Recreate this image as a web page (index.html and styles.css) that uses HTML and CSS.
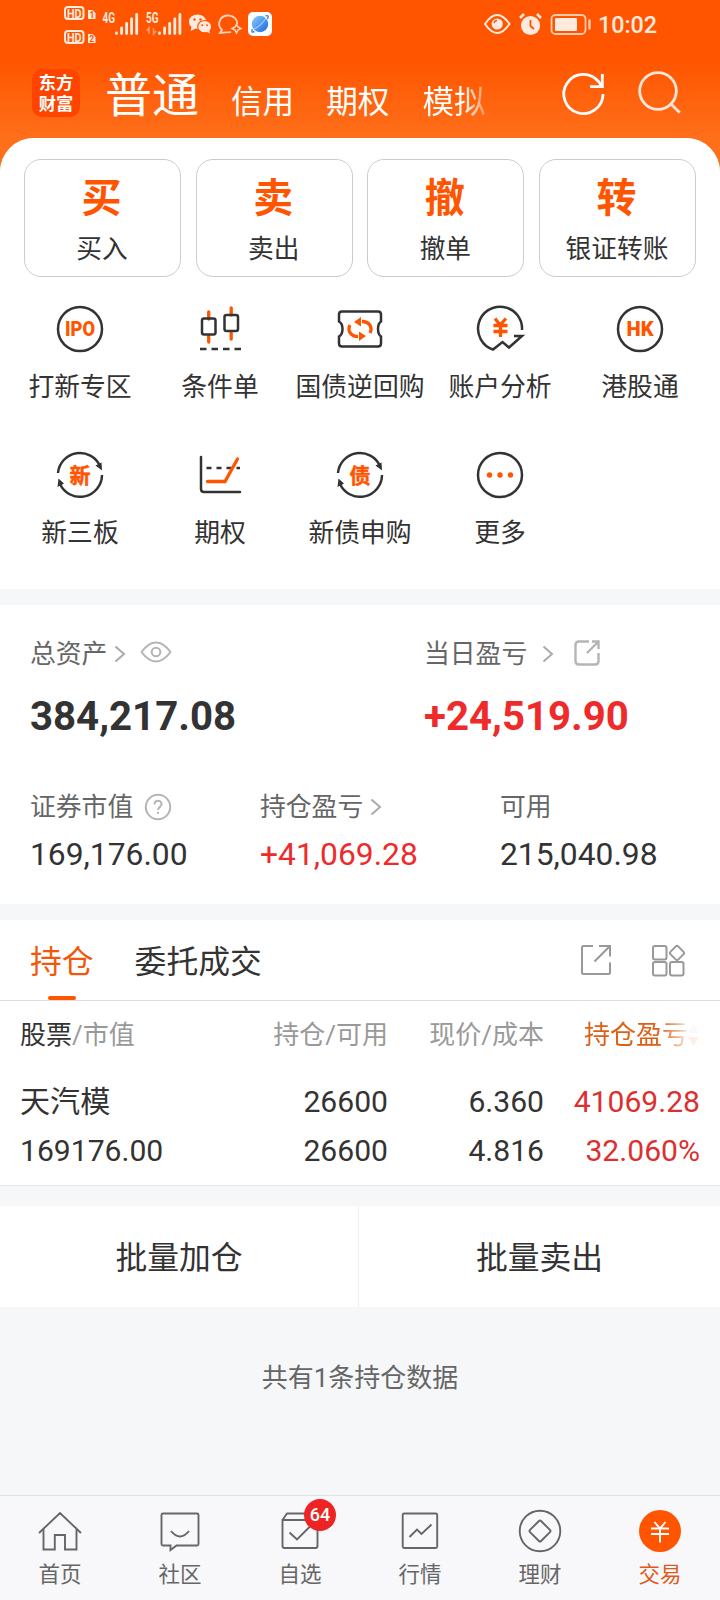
FILE: index.html
```html
<!DOCTYPE html>
<html lang="zh-CN">
<head>
<meta charset="utf-8">
<title>交易</title>
<link rel="stylesheet" href="styles.css">
</head>
<body>
<div class="screen">
  <header class="top">
    <div class="status">
      <svg class="status-left" viewBox="60 0 220 48" width="220" height="48">
        <g fill="none" stroke="#ffeadf" stroke-width="2"><rect x="65" y="7" width="18.500" height="12" rx="3"/><rect x="65" y="31" width="18.500" height="12" rx="3"/></g>
        <g fill="#ffeadf"><path d="M88 10h4.500l3 3v6h-7.500zM88 34h4.500l3 3v6h-7.500z"/>
          <g class="hd"><text x="67" y="17.600" textLength="14.600" lengthAdjust="spacingAndGlyphs">HD</text><text x="67" y="41.600" textLength="14.600" lengthAdjust="spacingAndGlyphs">HD</text></g>
          <g class="net"><text x="102.500" y="22.800" textLength="12.500" lengthAdjust="spacingAndGlyphs">4G</text><text x="146" y="22.800" textLength="12.500" lengthAdjust="spacingAndGlyphs">5G</text></g>
        </g>
        <g class="sim"><text x="89.600" y="17.800">1</text><text x="89.200" y="41.800">2</text></g>
        <g stroke="#ffeadf" stroke-width="2.800" stroke-linecap="round"><path d="M116.500 33v.500M121.600 28v5.500M126.600 23.500v10M131.600 19v14.500M136.700 14.500v19M159.500 33v.500M164.600 28v5.500M169.700 23.500v10M174.800 19v14.500M179.900 14.500v19"/></g>
        <path d="M149 34v-6l-2.500 3M153.500 28v6l2.500-3" fill="none" stroke="#ff9a66" stroke-width="1.500"/>
        <g fill="#ffeadf"><ellipse cx="197.500" cy="21.700" rx="8.600" ry="7.200"/><path d="M191.500 26l-.800 5 5-2.500z"/><ellipse cx="204.700" cy="26.700" rx="7" ry="6.200" stroke="#ff5500" stroke-width="1.200"/><path d="M206 31.500l4 2-.800-4z"/></g>
        <g fill="#ff5500"><circle cx="194.500" cy="19.500" r="1.200"/><circle cx="200.500" cy="19.500" r="1.200"/><circle cx="202.300" cy="25.300" r="1"/><circle cx="207" cy="25.300" r="1"/></g>
        <path d="M231 32q-2 .600-5 .300l-6 .700 2-3c-5.500-5-2.500-14.500 6-14.500 5.500 0 9.300 3.700 9.300 8.500" fill="none" stroke="#ffd6c2" stroke-width="1.800"/>
        <path d="M236.500 24.500l1.500 2.500 3 1.500-3 1.500-1.500 3-1.500-3-3-1.500 3-1.500z" fill="none" stroke="#ffd6c2" stroke-width="1.600"/>
        <rect x="248" y="12" width="24" height="24" rx="5" fill="#fff"/>
        <defs><linearGradient id="planet" x2="1" y2="1"><stop offset="0" stop-color="#8dccff"/><stop offset="1" stop-color="#1867dc"/></linearGradient></defs>
        <circle cx="260" cy="24" r="8.200" fill="url(#planet)"/><path d="M252.500 29q-2 4.200 2 2.500M265.500 16q4-1.500 2 3" fill="none" stroke="#3c8cf0" stroke-width="1.500"/><path d="M254 29q7-3 12-11" fill="none" stroke="#9bd0ff" stroke-width="1.200"/>
      </svg>
      <svg class="status-right" viewBox="480 0 116 48" width="116" height="48">
        <g fill="none" stroke="#ffeadf"><path d="M485 24q6-9 12.200-9t12.300 9q-6.200 9-12.300 9T485 24z" stroke-width="2"/><rect x="551.500" y="15" width="34" height="19" rx="4" stroke="#ffc9ad" stroke-width="1.800"/><path d="M589.500 20.500v8" stroke="#ffc9ad" stroke-width="2.400" stroke-linecap="round"/><path d="M520 18l4-4M537 14l4 4" stroke-width="2.500"/></g>
        <circle cx="497.200" cy="24" r="5.600" fill="#ffeadf"/><path d="M494 23q.500-2.500 3-2.500" stroke="#ff5500" stroke-width="1.300" fill="none"/>
        <circle cx="530.500" cy="25.500" r="9.600" fill="#ffeadf"/><path d="M530.500 20v6l3.500 3" fill="none" stroke="#ff5500" stroke-width="1.800"/>
        <rect x="555" y="18" width="22" height="13" rx="1" fill="#ffeadf"/>
      </svg>
      <span class="clock">10:02</span>
    </div>
    <div class="bar">
      <div class="logo"><span>东方</span><span>财富</span></div>
      <nav class="modes">
        <span class="mode mode-on">普通</span><span class="mode">信用</span><span class="mode">期权</span><span class="mode mode-fade">模拟</span>
      </nav>
      <svg class="bar-icons" viewBox="560 69 126 48" width="126" height="48" fill="none" stroke="#fff" stroke-width="2.800">
        <path d="M603 94a19.600 19.600 0 1 1-4.500-12.500L602 86.200M602.300 74v12.700H590"/>
        <g stroke="#ffe6d8"><circle cx="658" cy="91" r="18.300"/><path d="M671 104l8.800 8.800"/></g>
      </svg>
    </div>
  </header>

  <main class="sheet">
    <section class="quick">
      <div class="card"><b>买</b><span>买入</span></div>
      <div class="card"><b>卖</b><span>卖出</span></div>
      <div class="card"><b>撤</b><span>撤单</span></div>
      <div class="card"><b>转</b><span>银证转账</span></div>
    </section>
    <section class="tools">
      <div class="tool"><svg viewBox="-25 -25 50 50"><circle r="22"/><text class="glyph" x="0" y="7" textLength="30" lengthAdjust="spacingAndGlyphs">IPO</text></svg><span>打新专区</span></div>
      <div class="tool"><svg viewBox="-25 -25 50 50"><g class="hot"><path d="M-11.300-17v7M-11.300 7v6M11.200-21v7M11.200 4v6" stroke-linecap="round"/></g><rect x="-18" y="-10.500" width="13.500" height="16" rx="2"/><rect x="4.500" y="-14" width="13.500" height="16" rx="2"/><path d="M-20 20H21.500" stroke-dasharray="6.500 5"/></svg><span>条件单</span></div>
      <div class="tool"><svg viewBox="-25 -25 50 50"><path d="M-18-17.500h36q3 0 3 3v7q-3 2-3 7.500t3 7.500v7q0 3-3 3h-36q-3 0-3-3v-7q3.500-2 3.500-7.500t-3.500-7.500v-7q0-3 3-3z"/><path class="hot" d="M-10-4C-13 2-9 7.500-2 7.500M10 4C13-2 9-7.500 2-7.500"/><path class="fill" d="M-6-7L1-12v9.500zM6 7L-1 12V2.500z"/></svg><span>国债逆回购</span></div>
      <div class="tool"><svg viewBox="-25 -25 50 50"><path d="M22 1A22 22 0 1 0-7 20.500L2.500 13 9 18.500 22 7H14"/><path class="hot" d="M-5-10.500L0-4l6-6.500M-6.500-3.500h14M-6.500 2.500h14M.500-4v12"/></svg><span>账户分析</span></div>
      <div class="tool"><svg viewBox="-25 -25 50 50"><circle r="22"/><text class="glyph" x="0" y="7" textLength="27" lengthAdjust="spacingAndGlyphs">HK</text></svg><span>港股通</span></div>
      <div class="tool"><svg viewBox="-25 -25 50 50"><path d="M-22-2A22 22 0 0 1 20-9M22 0A22 22 0 0 1-20 9"/><path class="dark" d="M15.500-9.500l6-3 .500 8zM-22.500 12l1-8.500 5.500 5z"/><text class="glyph cn" x="0" y="7.500">新</text></svg><span>新三板</span></div>
      <div class="tool"><svg viewBox="-25 -25 50 50"><path d="M-19-18v32q0 3 3 3h36" stroke-linecap="round"/><path d="M-13.500-7H20" stroke-dasharray="5 5"/><path class="hot" d="M-12.500 6.500H5L17.500-16" stroke-linecap="round"/></svg><span>期权</span></div>
      <div class="tool"><svg viewBox="-25 -25 50 50"><path d="M-22-2A22 22 0 0 1 20-9M22 0A22 22 0 0 1-20 9"/><path class="dark" d="M15.500-9.500l6-3 .500 8zM-22.500 12l1-8.500 5.500 5z"/><text class="glyph cn" x="0" y="7.500">债</text></svg><span>新债申购</span></div>
      <div class="tool"><svg viewBox="-25 -25 50 50"><circle r="22"/><g class="fill"><circle cx="-10.500" cy="0" r="2.700"/><circle cx="0" cy="0" r="2.700"/><circle cx="10.500" cy="0" r="2.700"/></g></svg><span>更多</span></div>
    </section>
    <div class="gap"></div>

    <section class="assets">
      <div class="totals">
        <div class="total">
          <div class="label"><span>总资产</span>
            <svg class="chev" width="12" height="18" viewBox="0 0 12 18"><path d="M1.500 1.500L10 9l-8.500 7.500"/></svg>
            <svg class="eye" width="32" height="24" viewBox="0 0 32 24"><path d="M1.500 12q7-9.500 14.500-9.500T30.500 12q-7 9.500-14.500 9.500T1.500 12z"/><circle cx="16" cy="12" r="4.300"/></svg>
          </div>
          <strong>384,217.08</strong>
        </div>
        <div class="total">
          <div class="label"><span>当日盈亏</span>
            <svg class="chev chev-far" width="12" height="18" viewBox="0 0 12 18"><path d="M1.500 1.500L10 9l-8.500 7.500"/></svg>
            <svg class="share" width="28" height="28" viewBox="0 0 28 28"><path d="M16 2.500H6q-3.500 0-3.500 3.500v16q0 3.500 3.500 3.500h16q3.500 0 3.500-3.500V14M14 14L25 3M19 2.500h6.500V10"/></svg>
          </div>
          <strong class="up">+24,519.90</strong>
        </div>
      </div>
      <div class="parts">
        <div class="part"><div class="label"><span>证券市值</span><svg class="help" width="28" height="28" viewBox="0 0 28 28"><circle cx="14" cy="14" r="12.200"/><path d="M10.500 11.500c0-5 7-4.800 7-.500 0 2.800-3.500 3-3.500 6M14 18.800v2"/></svg></div><span class="num">169,176.00</span></div>
        <div class="part"><div class="label"><span>持仓盈亏</span><svg class="chev" width="12" height="18" viewBox="0 0 12 18"><path d="M1.500 1.500L10 9l-8.500 7.500"/></svg></div><span class="num up">+41,069.28</span></div>
        <div class="part"><div class="label"><span>可用</span></div><span class="num">215,040.98</span></div>
      </div>
    </section>
    <div class="gap"></div>

    <section class="holdings">
      <div class="tabs">
        <span class="tab tab-on">持仓</span><span class="tab">委托成交</span>
        <svg class="tab-icons" viewBox="578 940 108 40" width="108" height="40"><path d="M593 946h-9.500q-1.500 0-1.500 1.500v25q0 1.500 1.500 1.500h25q1.500 0 1.500-1.500V962.500M594.500 961.500L610 946M599 946h11v10.500"/><rect x="653" y="946" width="13.500" height="13.500" rx="2"/><rect x="653" y="962" width="13.500" height="13.500" rx="2"/><rect x="670" y="962" width="13.500" height="13.500" rx="2"/><rect x="671.500" y="947.500" width="11" height="11" rx="2" transform="rotate(45 677 953)"/></svg>
      </div>
      <div class="grid grid-head"><span><em>股票</em>/市值</span><span>持仓/可用</span><span>现价/成本</span><span class="sort">持仓盈亏<svg width="11" height="24" viewBox="0 0 11 24"><path d="M5.500 1L11 10H0z" fill="#ccc"/><path d="M5.500 23L0 14h11z" fill="#ff5500"/></svg></span></div>
      <div class="grid grid-row"><span>天汽模</span><span>26600</span><span>6.360</span><span class="up">41069.28</span></div>
      <div class="grid grid-row"><span>169176.00</span><span>26600</span><span>4.816</span><span class="up">32.060%</span></div>
    </section>
    <div class="batch"><span>批量加仓</span><span>批量卖出</span></div>
    <p class="summary">共有1条持仓数据</p>
  </main>

  <nav class="dock">
    <a class="dock-item"><svg viewBox="-24 -24 48 48"><path d="M-21 2L0-18 21 2M-16.500-2v20.500h11.300V4H5v14.500H16.500V-2"/></svg><span>首页</span></a>
    <a class="dock-item"><svg viewBox="-24 -24 48 48"><path d="M-17-17.500h34q1.500 0 1.500 1.500v29q0 1.500-1.500 1.500H-3.500L-9.500 19v-4.500H-17q-1.500 0-1.500-1.500v-29q0-1.500 1.500-1.500zM-9 0Q0 11 9 0"/></svg><span>社区</span></a>
    <a class="dock-item"><svg viewBox="-24 -24 48 48"><path d="M-17.500-11h35v26q0 2-2 2h-31q-2 0-2-2zM-17.500-11l4.500-6.500h26l4.500 6.500M-10.500 1.500l7.500 7L10-4.500"/></svg><span>自选</span><i class="badge">64</i></a>
    <a class="dock-item"><svg viewBox="-24 -24 48 48"><rect x="-17.300" y="-17.500" width="34.500" height="34.500" rx="1.500"/><path d="M-10.500 6L-3-1.500l4.500 4.500L11.500-6.500"/></svg><span>行情</span></a>
    <a class="dock-item"><svg viewBox="-24 -24 48 48"><circle r="20.300"/><rect x="-7.800" y="-7.800" width="15.600" height="15.600" rx="1.500" transform="rotate(45)"/></svg><span>理财</span></a>
    <a class="dock-item dock-on"><svg viewBox="-24 -24 48 48"><circle r="21"/><path d="M-5.500-9L0-2.500 5.500-9M-9-2.500H9M-9 3H9M0-2.500v14"/></svg><span>交易</span></a>
  </nav>
</div>
</body>
</html>
```
FILE: styles.css
```css
* { box-sizing: border-box; }
body { margin: 0; font-family: Roboto, "Noto Sans CJK SC", sans-serif; color: #333; }
svg { display: block; flex: none; overflow: visible; }
em, i { font-style: normal; }
.screen { width: 720px; height: 1600px; display: flex; flex-direction: column; overflow: hidden; background: linear-gradient(#ff5500 0, #ff5500 60px, #ff6f1a 138px, #ff701c 180px) no-repeat #f6f7f9; background-size: 100% 180px; }

.top { height: 138px; flex: none; }
.status { height: 48px; display: flex; padding-left: 60px; }
.status-right { margin-left: 200px; }
.clock { margin-left: 2px; font-size: 23.3px; font-weight: 500; line-height: 50px; color: #ffeadf; }
.hd { font: 700 12.5px Roboto, sans-serif; }
.net { font: 700 14px Roboto, sans-serif; }
.sim { font: 700 8.5px Roboto, sans-serif; fill: #ff5500; }
.bar { height: 90px; padding: 21px 34px 0 32px; display: flex; align-items: flex-start; }
.logo { width: 48px; height: 48px; border-radius: 10px; background: #ff4400; color: #fff; display: flex; flex-direction: column; align-items: center; padding-top: 4px; font-size: 17.3px; font-weight: 700; line-height: 20.5px; }
.modes { margin-left: 25px; display: flex; align-items: flex-start; gap: 32px; height: 48px; color: #fff; }
.mode { font-size: 31.6px; line-height: 67px; }
.mode-on { font-size: 47px; line-height: 53px; }
.mode-fade { margin-left: 1px; background: linear-gradient(90deg, #fff 65%, rgba(255,255,255,.3)); -webkit-background-clip: text; background-clip: text; color: transparent; }
.bar-icons { margin-left: auto; }

.sheet { flex: 1; border-radius: 34px 34px 0 0; background: #f6f7f9; overflow: hidden; }
.quick { background: #fff; padding: 21px 24px 0; display: grid; grid-template-columns: repeat(4, 157px); justify-content: space-between; }
.card { height: 118px; border: 1px solid #ccc; border-radius: 17px; display: flex; flex-direction: column; align-items: center; padding-top: 15px; }
.card b { font-size: 40px; line-height: 48px; margin-left: -2px; color: #ff5500; }
.card span { font-size: 25.7px; line-height: 52px; margin-left: -1px; }
.tools { background: #fff; padding: 27px 10px 0; height: 312px; display: grid; grid-template-columns: repeat(5, 140px); grid-auto-rows: 146px; }
.tool { display: flex; flex-direction: column; align-items: center; font-size: 25.8px; line-height: 40px; white-space: nowrap; }
.tool svg { width: 50px; height: 50px; margin-bottom: 13px; fill: none; stroke: #333; stroke-width: 2.5; }
.tool .hot { stroke: #ff5500; stroke-width: 3.3; }
.tool .fill { fill: #ff5500; stroke: none; }
.tool .dark { fill: #333; stroke: none; }
.tool .glyph { fill: #ff5500; stroke: none; font-size: 20px; font-weight: 900; text-anchor: middle; }
.tool .cn { font-size: 21px; font-weight: 700; stroke: #ff5500; stroke-width: .5; }
.gap { height: 16px; background: #f6f7f9; }

.assets { background: #fff; height: 299px; padding: 29px 30px 0; }
.totals { display: grid; grid-template-columns: 394px 1fr; }
.label { height: 40px; display: flex; align-items: center; font-size: 25.8px; line-height: 40px; color: #666; }
.totals .label { line-height: 42px; }
.label svg { fill: none; stroke: #b5b5b5; stroke-width: 2; }
.label .chev { margin-left: 7px; stroke: #aaa; }
.label .chev-far { margin-left: 15px; }
.label .eye { margin: -4px 0 0 14px; }
.label .share { margin: -2px 0 0 19px; stroke-width: 2.4; }
.label .help { margin: -1px 0 0 11px; }
.total strong { display: block; margin-top: 17px; font-size: 40.2px; line-height: 51px; font-weight: 700; }
.parts { margin-top: 45px; display: grid; grid-template-columns: 230px 240px 1fr; }
.num { display: block; font-size: 31.8px; line-height: 48px; margin-top: 3px; }
.assets .up { color: #ee2a2a; }
.up { color: #dc3030; }

.holdings { background: #fff; height: 266px; border-bottom: 1px solid #e8e8e8; }
.tabs { height: 81px; border-bottom: 1px solid #ddd; padding: 0 34px 0 30px; display: flex; gap: 41px; }
.tab { font-size: 31.8px; line-height: 84px; height: 80px; display: flex; flex-direction: column; align-items: center; }
.tab-on { color: #f2580c; }
.tab-on::after { content: ""; width: 28px; height: 4px; margin-top: -8px; border-radius: 2px; background: #ff5500; }
.tab-icons { margin: 20px 0 0 auto; fill: none; stroke: #999; stroke-width: 2; }
.grid { display: grid; grid-template-columns: 200px 168px 156px 156px; padding-left: 20px; text-align: right; white-space: nowrap; }
.grid span:first-child { text-align: left; }
.grid-head { font-size: 26px; line-height: 68px; height: 76px; color: #999; }
.grid-head em { color: #333; }
.sort { display: flex; justify-content: flex-end; align-items: center; height: 68px; color: #dc6018; -webkit-mask-image: linear-gradient(90deg, #000 75%, rgba(0,0,0,.1) 94%); mask-image: linear-gradient(90deg, #000 75%, rgba(0,0,0,.1) 94%); }
.grid-head .sort { margin-right: 1px; }
.grid-row { font-size: 30.1px; line-height: 49px; }
.batch { margin-top: 20px; height: 101px; background: #fff; display: grid; grid-template: 101px / 359px 361px; text-align: center; font-size: 31.8px; line-height: 104px; overflow: hidden; }
.batch span:first-child { border-right: 1px solid #eee; }
.summary { margin: 51px 0 0; text-align: center; font-size: 26px; line-height: 40px; color: #666; }

.dock { height: 105px; flex: none; background: #f8f8fa; border-top: 1px solid #dfe1e3; display: grid; grid-template-columns: repeat(6, 120px); }
.dock-item { position: relative; display: flex; flex-direction: column; align-items: center; padding-top: 11px; font-size: 21.5px; line-height: 30px; color: #666; }
.dock-item svg { width: 48px; height: 48px; margin-bottom: 5px; fill: none; stroke: #666; stroke-width: 1.9; }
.dock-on { color: #e0591a; }
.dock-on svg { stroke: #fff; }
.dock-on svg circle { fill: #ff5500; stroke: none; }
.badge { position: absolute; left: 64px; top: 3px; width: 32px; height: 32px; border-radius: 50%; background: #ee2424; color: #fff; font-size: 18px; font-weight: 500; line-height: 32px; text-align: center; }
```
